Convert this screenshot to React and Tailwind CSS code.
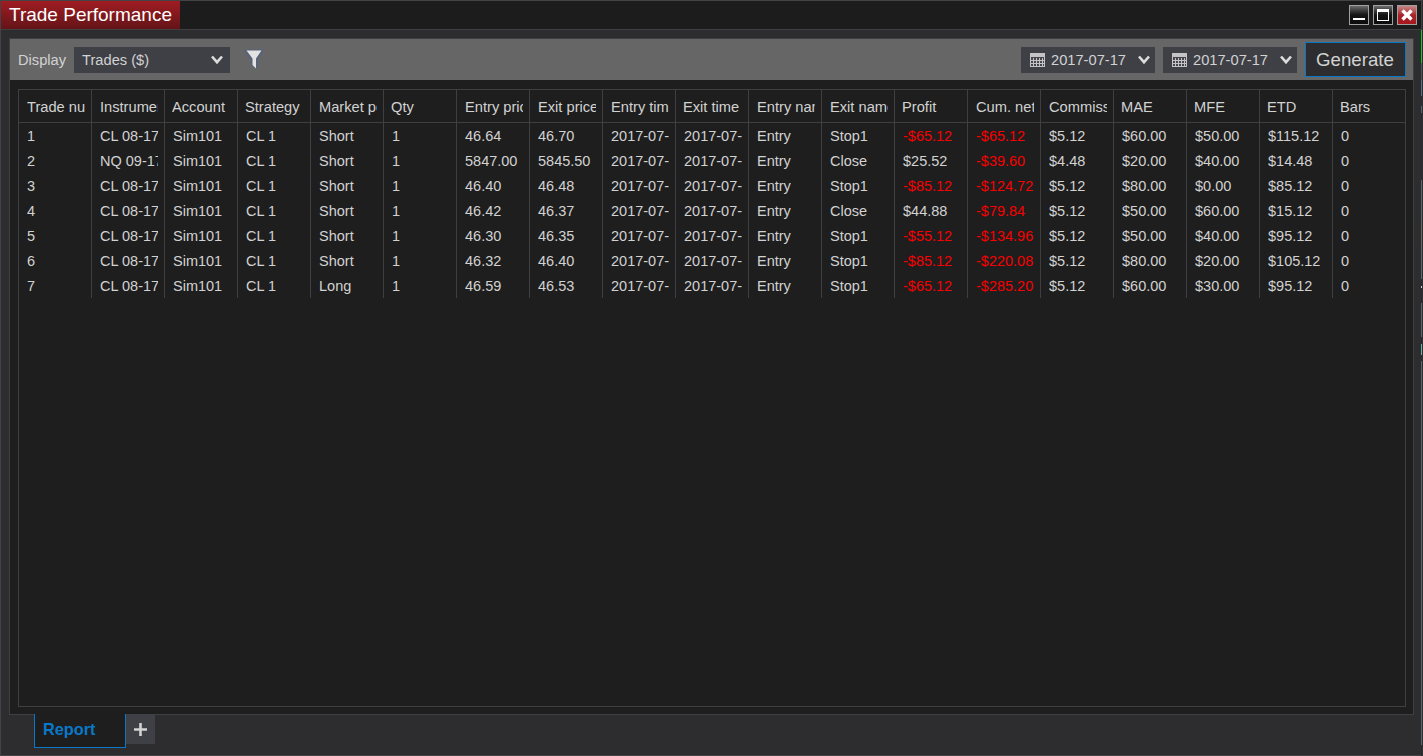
import React, { useState } from 'react';

// snug headers fit their column and sit a pixel further left than the clipped ones
const COLUMNS = [
  { label: 'Trade number', key: 'id' },
  { label: 'Instrument', key: 'instrument' },
  { label: 'Account', key: 'account', snug: true },
  { label: 'Strategy', key: 'strategy', snug: true },
  { label: 'Market pos.', key: 'side' },
  { label: 'Qty', key: 'qty', snug: true },
  { label: 'Entry price', key: 'entryPrice' },
  { label: 'Exit price', key: 'exitPrice' },
  { label: 'Entry time', key: 'entryTime' },
  { label: 'Exit time', key: 'exitTime', snug: true },
  { label: 'Entry name', key: 'entryName' },
  { label: 'Exit name', key: 'exitName' },
  { label: 'Profit', key: 'profit', snug: true },
  { label: 'Cum. net profit', key: 'cumProfit' },
  { label: 'Commission', key: 'commission' },
  { label: 'MAE', key: 'mae', snug: true },
  { label: 'MFE', key: 'mfe', snug: true },
  { label: 'ETD', key: 'etd', snug: true },
  { label: 'Bars', key: 'bars', snug: true },
];

const TRADES = [
  ['CL 08-17', 'Short', '46.64', '46.70', 'Stop1', '-$65.12', '-$65.12', '$5.12', '$60.00', '$50.00', '$115.12'],
  ['NQ 09-17', 'Short', '5847.00', '5845.50', 'Close', '$25.52', '-$39.60', '$4.48', '$20.00', '$40.00', '$14.48'],
  ['CL 08-17', 'Short', '46.40', '46.48', 'Stop1', '-$85.12', '-$124.72', '$5.12', '$80.00', '$0.00', '$85.12'],
  ['CL 08-17', 'Short', '46.42', '46.37', 'Close', '$44.88', '-$79.84', '$5.12', '$50.00', '$60.00', '$15.12'],
  ['CL 08-17', 'Short', '46.30', '46.35', 'Stop1', '-$55.12', '-$134.96', '$5.12', '$50.00', '$40.00', '$95.12'],
  ['CL 08-17', 'Short', '46.32', '46.40', 'Stop1', '-$85.12', '-$220.08', '$5.12', '$80.00', '$20.00', '$105.12'],
  ['CL 08-17', 'Long', '46.59', '46.53', 'Stop1', '-$65.12', '-$285.20', '$5.12', '$60.00', '$30.00', '$95.12'],
].map(([instrument, side, entryPrice, exitPrice, exitName, profit, cumProfit, commission, mae, mfe, etd], i) => ({
  id: i + 1,
  instrument,
  account: 'Sim101',
  strategy: 'CL 1',
  side,
  qty: 1,
  entryPrice,
  exitPrice,
  entryTime: '2017-07-17',
  exitTime: '2017-07-17',
  entryName: 'Entry',
  exitName,
  profit,
  cumProfit,
  commission,
  mae,
  mfe,
  etd,
  bars: 0,
}));

function Chevron() {
  return (
    <svg width="14" height="10" viewBox="0 0 14 10" className="shrink-0">
      <path d="M2 1.5 L7 7.2 L12 1.5" fill="none" stroke="#dcdcdc" strokeWidth="2.6" />
    </svg>
  );
}

function CalendarIcon() {
  return (
    <svg width="15" height="14" viewBox="0 0 15 14" className="shrink-0" shapeRendering="crispEdges">
      <rect width="15" height="14" fill="#c4c4c6" />
      <g fill="#46464c">
        <rect x="1" y="4" width="13" height="1" />
        {[5, 8, 11].map(y => [1, 4, 7, 10, 13].map(x => (
          <rect key={`${x}-${y}`} x={x} y={y} width={x === 13 ? 1 : 2} height="2" />
        )))}
      </g>
    </svg>
  );
}

function FilterIcon() {
  return (
    <svg width="22" height="24" viewBox="0 0 22 24" className="shrink-0">
      <path d="M3 3 H19 L13 11 V19 L9.5 16.5 V11 Z" fill="#3e5a8c" stroke="#4a618b" strokeWidth="3" strokeLinejoin="round" opacity="0.55" />
      <path d="M3.5 2.5 H18.5 L13 10.5 V20.5 L9.5 17 V10.5 Z" fill="#e2e2e2" />
    </svg>
  );
}

function DatePicker({ value }) {
  return (
    <button className="flex items-center w-[134px] h-[26px] pl-[9px] pr-1 bg-[#3f3f46]">
      <CalendarIcon />
      <span className="ml-[6px] flex-1 text-left pt-px">{value}</span>
      <Chevron />
    </button>
  );
}

function WindowButton({ kind }) {
  return (
    <button
      className={`w-5 h-5 border border-[#a0a0a0] bg-linear-to-b ${kind === 'close'
        ? 'from-[#c48488] via-[#a8232a] to-[#a8161d]'
        : 'from-[#6c6c6c] via-[#151515] to-[#0c0c0c]'}`}
    >
      <svg width="18" height="18" viewBox="0 0 18 18" className="block">
        {kind === 'min' && <rect x="3" y="12" width="12" height="2" fill="#fff" />}
        {kind === 'max' && <path d="M3 3H15V15H3Z M4 6V14H14V6Z" fill="#fff" fillRule="evenodd" />}
        {kind === 'close' && <path d="M4.5 4.5 L13.5 13.5 M13.5 4.5 L4.5 13.5" stroke="#fff" strokeWidth="3.4" />}
      </svg>
    </button>
  );
}

function TradeTable() {
  return (
    <div className="flex-1 min-w-0 border border-[#3f3f42]">
      <div className="flex h-[33px] border-b border-[#3f3f42]">
        {COLUMNS.map(col => (
          <div key={col.key} className={`w-[73px] last:w-[72px] shrink-0 pr-[6px] last:border-r-0 border-r border-[#3f3f42] ${col.snug ? 'pl-[7px]' : 'pl-2'}`}>
            <div className="overflow-hidden whitespace-nowrap leading-[35px] h-8">{col.label}</div>
          </div>
        ))}
      </div>
      {TRADES.map(trade => (
        <div key={trade.id} className="flex h-[25px] text-[14.5px]">
          {COLUMNS.map(col => {
            const value = String(trade[col.key]);
            return (
              <div key={col.key} className="w-[73px] last:w-[72px] shrink-0 pl-2 pr-[6px] last:border-r-0 border-r border-[#3f3f42]">
                <div className={`overflow-hidden whitespace-nowrap h-[25px] leading-[27px] ${value.startsWith('-') ? 'text-[#f80000]' : ''}`}>
                  {value}
                </div>
              </div>
            );
          })}
        </div>
      ))}
    </div>
  );
}

export default function App() {
  const [tab, setTab] = useState('report');

  return (
    <div className="w-[1423px] h-[756px] flex bg-[#2d2d30] overflow-hidden">
      <div className="w-[1421px] h-[756px] shrink-0 flex flex-col bg-[#2d2d30] border border-r-0 border-[#434346] text-[14.67px] text-[#d2d2d2] font-['Liberation_Sans',Arial,sans-serif]">
        {/* Title bar */}
        <header className="h-[29px] shrink-0 flex justify-between bg-[#1c1c1c] border-b border-[#3f3f42]">
          <h1 className="w-[179px] h-[28px] pl-2 bg-linear-to-b from-[#a01c22] to-[#641418] text-white text-[19px] leading-[27px] whitespace-nowrap">
            Trade Performance
          </h1>
          <div className="flex gap-1 pt-1 pr-1">
            <WindowButton kind="min" />
            <WindowButton kind="max" />
            <WindowButton kind="close" />
          </div>
        </header>

        {/* Report panel */}
        <main className="mt-2 ml-2 w-[1405px] h-[677px] shrink-0 flex flex-col bg-[#1e1e1e] border border-[#3f3f42]">
          <div className="h-[41px] shrink-0 flex items-center pl-2 pr-[7px] bg-[#666666]">
            <span>Display</span>
            <button className="ml-2 flex items-center justify-between w-[156px] h-[26px] pl-2 pr-[6px] bg-[#3f3f46]">
              <span className="pt-px">Trades ($)</span>
              <Chevron />
            </button>
            <button className="ml-[13px]"><FilterIcon /></button>
            <div className="ml-auto flex items-center gap-2">
              <DatePicker value="2017-07-17" />
              <DatePicker value="2017-07-17" />
              <button className="w-[101px] h-[35px] pr-px bg-[#2d2d30] border border-[#0a78c8] text-[18.67px]">Generate</button>
            </div>
          </div>
          <div className="flex-1 flex pt-[9px] pl-2 pr-[7px] pb-[7px]">
            <TradeTable />
          </div>
        </main>

        {/* Tabs */}
        <nav className="flex items-start pl-[33px] -mt-px relative">
          <button
            onClick={() => setTab('report')}
            className={`w-[92px] h-[34px] pl-2 pb-[2px] text-left font-bold text-[16.3px] border border-t-0 border-[#0a78c8] bg-[#1e1e1e] ${tab === 'report' ? 'text-[#0a78c8]' : ''}`}
          >
            Report
          </button>
          <button className="w-[29px] h-[30px] flex items-center justify-center bg-[#3f3f46]">
            <svg width="13" height="13" viewBox="0 0 13 13"><path d="M6.5 0V13M0 6.5H13" stroke="#d2d2d2" strokeWidth="2.6" /></svg>
          </button>
        </nav>
      </div>

      {/* Sliver of the window behind */}
      <div className="w-px shrink-0 flex flex-col bg-[#2b2b2e]">
        <div className="h-[30px] bg-[#3f3f42]" />
        <div className="h-[33px] bg-[#22c322]" />
        <div className="h-[7px] bg-[#4a5868]" />
        <div className="h-[10px] bg-[#55504c]" />
        <div className="h-4 bg-[#4d6f90]" />
        <div className="mt-[10px] h-[7px] bg-[#4d6780]" />
        <div className="mt-[67px] h-[43px] bg-[#5c6672]" />
        <div className="h-[22px] bg-[#6c6660]" />
        <div className="h-[34px] bg-[#5c6672]" />
        <div className="mt-[7px] h-[2px] bg-[#d0d0d0]" />
        <div className="mt-[15px] h-[34px] bg-[#5c6672]" />
        <div className="mt-[7px] h-[11px] bg-[#63b5a8]" />
        <div className="mt-[6px] h-[384px] bg-[#58646f]" />
      </div>
    </div>
  );
}
